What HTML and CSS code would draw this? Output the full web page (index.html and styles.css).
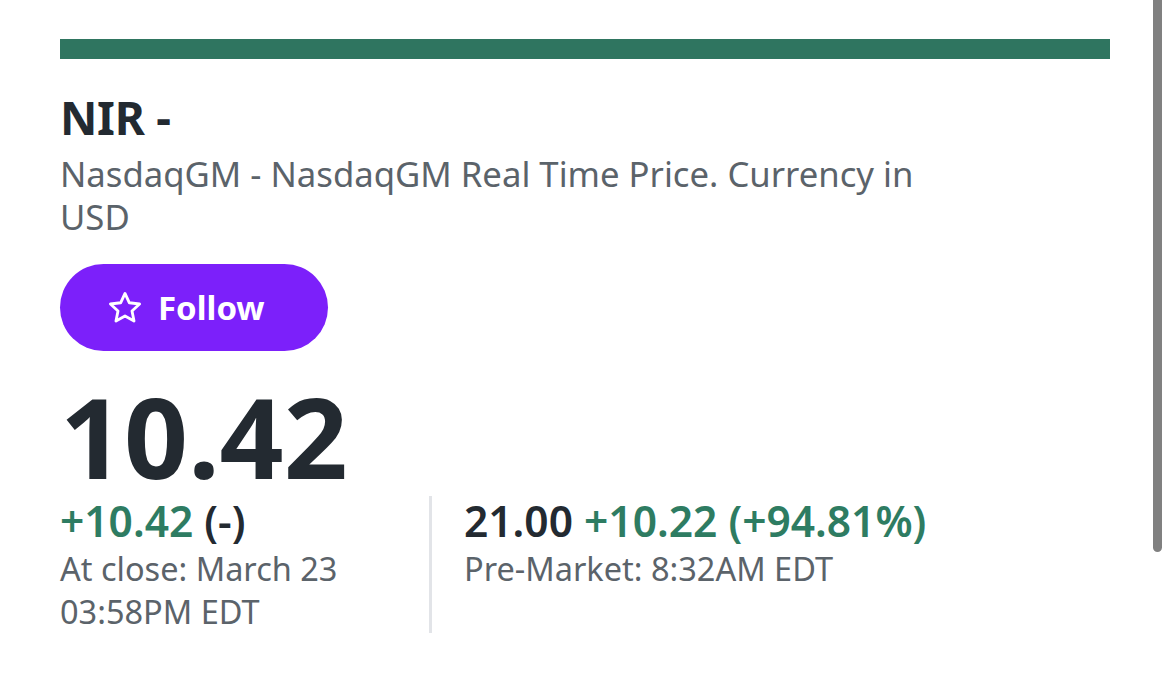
FILE: index.html
```html
<!DOCTYPE html>
<html>
<head>
<meta charset="utf-8">
<link rel="stylesheet" href="styles.css">
</head>
<body>
<div class="page">
  <div class="quote">
    <div class="accent"></div>
    <h1 class="ticker">NIR -</h1>
    <div class="exchange">NasdaqGM - NasdaqGM Real Time Price. Currency in USD</div>
    <button class="follow">
      <svg class="star" viewBox="0 0 24 24" width="38" height="38"><path d="M12 2.8l2.75 5.9 6.45.75-4.78 4.4 1.28 6.38L12 17.05l-5.7 3.18 1.28-6.38L2.8 9.45l6.45-.75z" fill="none" stroke="#fff" stroke-width="1.8" stroke-linejoin="round"/></svg>
      <span>Follow</span>
    </button>
    <div class="price">10.42</div>
    <div class="stats">
      <div class="col left">
        <div class="line"><span class="up">+10.42</span> <span class="dark">(-)</span></div>
        <div class="meta">At close: March 23<br>03:58PM EDT</div>
      </div>
      <div class="col right">
        <div class="line"><span class="dark">21.00</span> <span class="up">+10.22 (+94.81%)</span></div>
        <div class="meta">Pre-Market: 8:32AM EDT</div>
      </div>
    </div>
  </div>
  <div class="scrollbar"></div>
</div>
</body>
</html>
```
FILE: styles.css
```css
html, body {
  margin: 0;
  padding: 0;
  background: #fff;
}
body {
  font-family: "Noto Sans", "Open Sans", sans-serif;
  color: #232a31;
  width: 1170px;
  height: 679px;
  overflow: hidden;
}
.page {
  position: relative;
  height: 679px;
}
.quote {
  padding: 39px 60px 0 60px;
  width: 1050px;
}
.accent {
  height: 20px;
  background: #2f7560;
}
.ticker {
  margin: 28px 0 0 0;
  font-size: 46px;
  font-weight: 700;
  line-height: 60px;
  letter-spacing: -0.3px;
}
.exchange {
  width: 870px;
  font-size: 34.7px;
  line-height: 43px;
  color: #5b636a;
  margin-top: 5px;
}
.follow {
  margin-top: 26px;
  width: 268px;
  height: 87px;
  border: none;
  border-radius: 44px;
  background: #7c20fa;
  color: #fff;
  display: flex;
  align-items: center;
  padding: 0 0 0 46px;
  gap: 14px;
  font-family: inherit;
  font-size: 33px;
  font-weight: 700;
}
.star { display: block; }
.price {
  margin-top: 29px;
  font-size: 112px;
  font-weight: 700;
  line-height: 112px;
}
.stats {
  display: flex;
  margin-top: 4px;
}
.col {
  display: flex;
  flex-direction: column;
}
.left {
  width: 369px;
  border-right: 3px solid #e2e4e8;
}
.right {
  padding-left: 32px;
}
.line {
  font-size: 42.5px;
  font-weight: 600;
  line-height: 50px;
}
.up { color: #2e7c62; }
.dark { color: #232a31; }
.meta {
  font-size: 32.5px;
  line-height: 43px;
  color: #5b636a;
  margin-top: 1px;
}
.scrollbar {
  position: absolute;
  right: 8px;
  top: 0;
  width: 9px;
  height: 552px;
  background: #808080;
  border-radius: 0 0 5px 5px;
}
```
